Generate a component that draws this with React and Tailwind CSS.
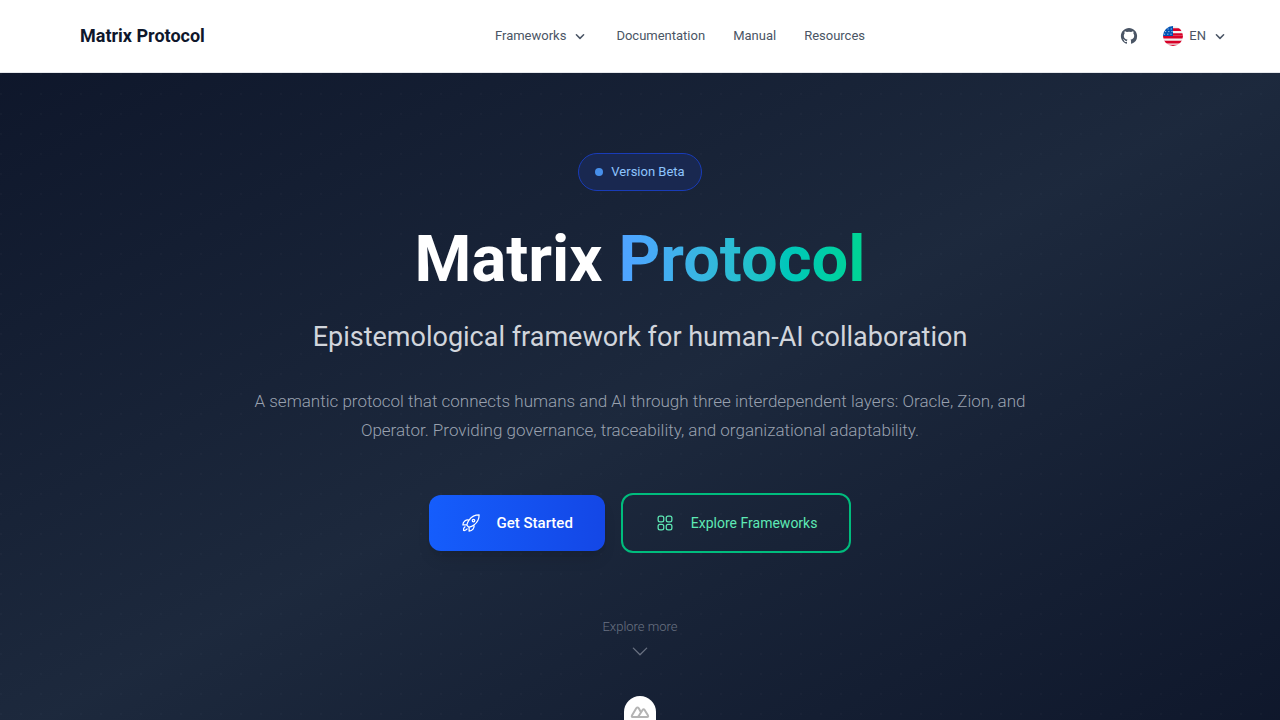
import { useState } from "react";

const nav = ["Documentation", "Manual", "Resources"];

function Chevron() {
  return (
    <svg viewBox="0 0 20 20" className="size-4" fill="none" stroke="currentColor" strokeWidth="1.9" strokeLinecap="round" strokeLinejoin="round" aria-hidden="true">
      <path d="m5.5 8.500 4.5 4.5L14.500 8.500" />
    </svg>
  );
}

function GitHubMark() {
  return (
    <svg viewBox="0 0 24 24" className="size-5" fill="currentColor" aria-hidden="true">
      <path d="M12 2.250c-5.380 0-9.750 4.370-9.750 9.770 0 4.320 2.790 7.980 6.660 9.270.480.090.660-.210.660-.470v-1.820c-2.710.600-3.280-1.150-3.280-1.150-.440-1.130-1.080-1.430-1.080-1.430-.880-.610.070-.590.070-.590.980.070 1.490 1 1.490 1 .870 1.500 2.280 1.070 2.830.820.090-.640.340-1.070.620-1.310-2.160-.250-4.440-1.090-4.440-4.830 0-1.070.380-1.940 1-2.620-.100-.250-.430-1.240.100-2.590 0 0 .820-.260 2.680 1a9.300 9.300 0 0 1 4.880 0c1.860-1.260 2.680-1 2.680-1 .530 1.350.200 2.340.100 2.590.620.680 1 1.550 1 2.620 0 3.750-2.280 4.570-4.450 4.810.350.310.660.900.660 1.810v2.690c0 .260.180.570.670.470a9.770 9.770 0 0 0 6.650-9.270c0-5.400-4.370-9.770-9.750-9.770Z" />
    </svg>
  );
}

function Flag() {
  return (
    <svg viewBox="0 0 20 20" className="size-5" aria-hidden="true">
      <defs><clipPath id="flag"><circle cx="10" cy="10" r="10" /></clipPath></defs>
      <g clipPath="url(#flag)">
        <path fill="#f0f0f0" d="M0 0h20v20H0z" />
        <path fill="#d80027" d="M10 2.300h10v2.600H10zM10 7.200h10v2.600H10zM0 10h20v2.600H0zM0 14.800h20v2.600H0zM4 18.800h12V20H4z" />
        <path fill="#0052b4" d="M0 0h10v10H0z" />
        <path stroke="#dbe7f5" strokeWidth=".8" strokeDasharray="1.200 2" d="M4.500 3H10M2 5.600h8M1 8.200h9" />
      </g>
    </svg>
  );
}

function Rocket() {
  return (
    <svg viewBox="0 0 24 24" className="size-5" fill="none" stroke="currentColor" strokeWidth="1.500" strokeLinecap="round" strokeLinejoin="round" aria-hidden="true">
      <path d="M15.590 14.370a6 6 0 0 1-5.840 7.380v-4.800m5.840-2.580a14.980 14.980 0 0 0 6.160-12.120A14.980 14.980 0 0 0 9.631 8.410m5.960 5.960a14.926 14.926 0 0 1-5.841 2.580m-.119-8.540a6 6 0 0 0-7.381 5.840h4.800m2.581-5.840a14.927 14.927 0 0 0-2.580 5.840m2.699 2.700c-.103.021-.207.041-.311.060a15.090 15.090 0 0 1-2.448-2.448 14.900 14.900 0 0 1 .060-.312m-2.240 2.390a4.493 4.493 0 0 0-1.757 4.306 4.493 4.493 0 0 0 4.306-1.758M16.500 9a1.500 1.500 0 1 1-3 0 1.500 1.500 0 0 1 3 0Z" />
    </svg>
  );
}

function Squares() {
  return (
    <svg viewBox="0 0 24 24" className="size-5" fill="none" stroke="currentColor" strokeWidth="1.500" aria-hidden="true">
      <rect x="3.750" y="3.750" width="6.750" height="6.750" rx="2.250" />
      <rect x="13.500" y="3.750" width="6.750" height="6.750" rx="2.250" />
      <rect x="3.750" y="13.500" width="6.750" height="6.750" rx="2.250" />
      <rect x="13.500" y="13.500" width="6.750" height="6.750" rx="2.250" />
    </svg>
  );
}

export default function App() {
  const [open, setOpen] = useState(false);
  return (
    <div className="font-['Roboto','Liberation_Sans',sans-serif]">
      <header className="border-b border-gray-200 bg-white text-[13px] leading-5 text-gray-600">
        <div className="grid h-18 grid-cols-[1fr_auto_1fr] items-center pl-20">
          <a href="#top" className="text-lg font-bold text-slate-900">Matrix Protocol</a>
          <nav className="flex items-center gap-7" aria-label="Main">
            <button type="button" aria-expanded={open} onClick={() => setOpen(!open)} className="flex items-center gap-1.5">
              Frameworks <Chevron />
            </button>
            {nav.map((item) => <a key={item} href={"#" + item.toLowerCase()}>{item}</a>)}
          </nav>
          <div className="flex items-center justify-end gap-6 pr-13">
            <a href="#github" aria-label="GitHub"><GitHubMark /></a>
            <button type="button" aria-label="Language: EN" className="flex items-center gap-1.5">
              <Flag /> EN <Chevron />
            </button>
          </div>
        </div>
      </header>

      <main id="top" className="bg-linear-to-br from-slate-900 via-slate-800 to-slate-900">
        <section className="flex flex-col items-center bg-[radial-gradient(circle_at_1px_1px,rgb(255_255_255/0.02)_1px,transparent_0)] bg-size-[20px_20px] px-6 py-20 text-center">
          <p className="flex items-center gap-2 rounded-full border border-blue-800 bg-[#192850] px-4 py-2 text-[13px] leading-5 text-blue-300">
            <span className="size-2 rounded-full bg-[#478fea]" /> Version Beta
          </p>
          <h1 className="mt-8 text-[65px] leading-18 font-bold text-white">
            Matrix <span className="bg-linear-to-r from-blue-400 to-emerald-400 bg-clip-text text-transparent">Protocol</span>
          </h1>
          <p className="mt-6 text-[27px] leading-9 text-gray-300">Epistemological framework for human-AI collaboration</p>
          <p className="mt-8 max-w-[800px] text-[17px] leading-[29px] font-light text-gray-400">
            A semantic protocol that connects humans and AI through three interdependent layers: Oracle, Zion, and Operator. Providing governance, traceability, and organizational adaptability.
          </p>
          <div className="mt-12 flex flex-wrap items-center justify-center gap-4">
            <a href="#start" className="flex h-14 items-center gap-4 rounded-xl bg-linear-to-r from-[#155dfc] to-[#1447e6] px-8 text-[15px] font-medium text-white shadow-lg"><Rocket />Get Started</a>
            <a href="#frameworks" className="flex h-15 items-center gap-4 rounded-xl border-2 border-[#00bc7d] px-8 text-sm text-[#5ee9b5]"><Squares />Explore Frameworks</a>
          </div>
          <a href="#more" className="mt-16 flex flex-col items-center gap-1 text-[13px] leading-5 font-light text-gray-500">
            Explore more
            <svg viewBox="0 0 24 24" className="size-5" fill="none" stroke="currentColor" strokeWidth="1.500" strokeLinecap="round" strokeLinejoin="round" aria-hidden="true"><path d="m4 8.500 8 8 8-8" /></svg>
          </a>
        </section>
      </main>
      <button type="button" aria-label="Open developer tools" className="fixed -bottom-2 left-1/2 flex h-8 w-8 -translate-x-1/2 justify-center rounded-t-full bg-white pt-2 text-[#b4b4b4]">
        <svg viewBox="0 0 24 16" className="h-4 w-5" fill="none" stroke="currentColor" strokeWidth="2.400" strokeLinejoin="round"><path d="M13 14H3Q1.500 14 2.500 12L7.500 3.500Q9 1.500 10.500 3.500L13 8M9.500 14h11q2 0 1-2l-4-6.500q-1.200-1.500-2.400 0L11 12Q10 14 8.500 14" /></svg>
      </button>
    </div>
  );
}
